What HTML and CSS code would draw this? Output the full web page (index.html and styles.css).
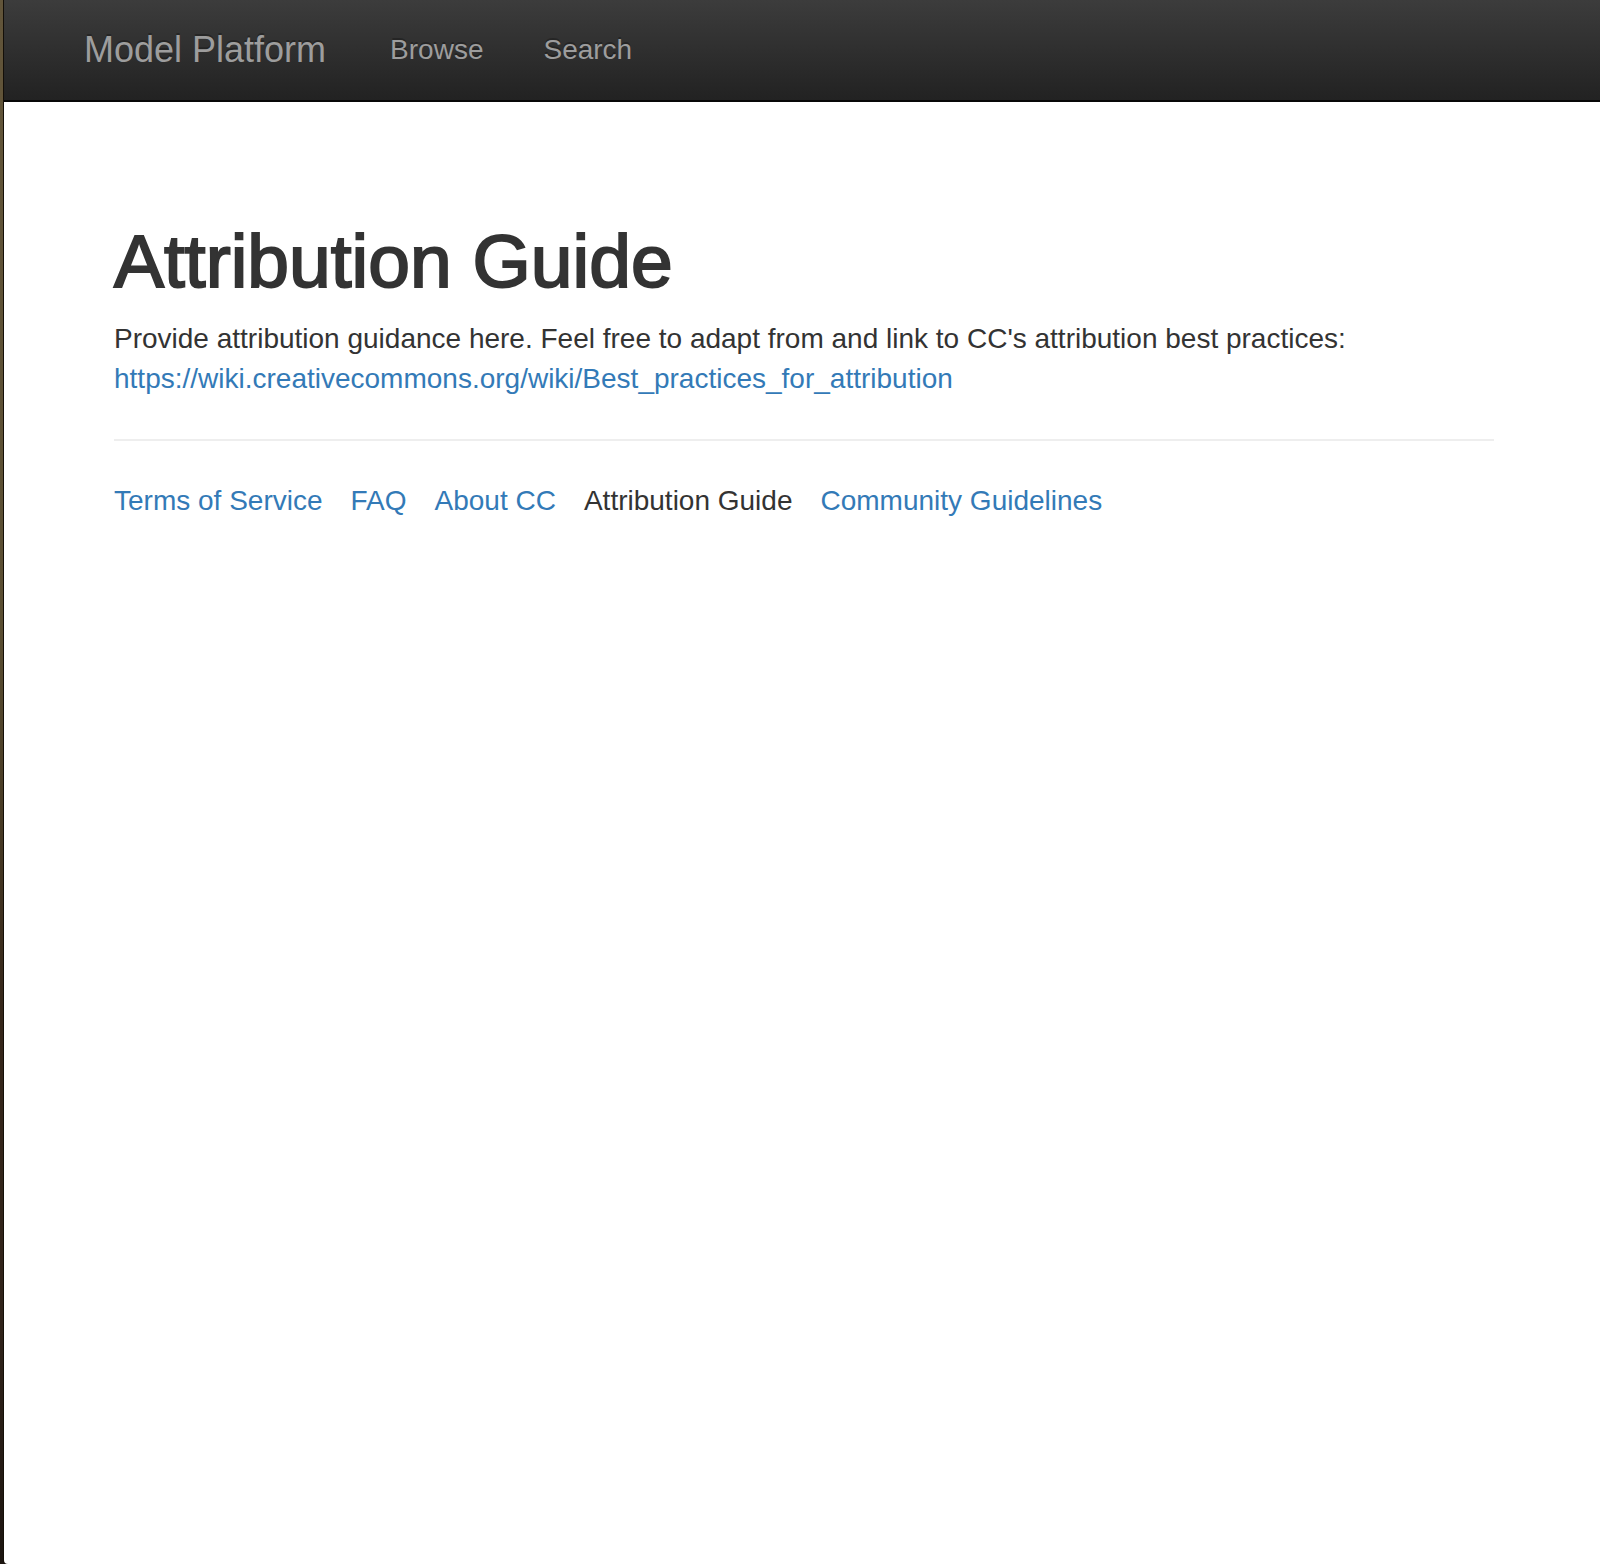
FILE: index.html
```html
<!DOCTYPE html>
<html lang="en">
<head>
<meta charset="utf-8">
<meta name="viewport" content="width=device-width, initial-scale=1">
<title>Attribution Guide - Model Platform</title>
<link rel="stylesheet" href="styles.css">
</head>
<body>
<div class="page">
  <header class="navbar">
    <a class="navbar-brand" href="#">Model Platform</a>
    <nav class="navbar-nav" aria-label="Main">
      <a class="navbar-link" href="#">Browse</a>
      <a class="navbar-link" href="#">Search</a>
    </nav>
  </header>
  <div class="container">
    <main>
      <h1 class="title">Attribution Guide</h1>
      <p class="text">Provide attribution guidance here. Feel free to adapt from and link to CC's attribution best practices: <a class="link" href="https://wiki.creativecommons.org/wiki/Best_practices_for_attribution">https://wiki.creativecommons.org/wiki/Best_practices_for_attribution</a></p>
    </main>
    <footer class="footer">
      <a class="link" href="#">Terms of Service</a>
      <a class="link" href="#">FAQ</a>
      <a class="link" href="#">About CC</a>
      <span>Attribution Guide</span>
      <a class="link" href="#">Community Guidelines</a>
    </footer>
  </div>
</div>
</body>
</html>
```
FILE: styles.css
```css
* {
  box-sizing: border-box;
}

body {
  margin: 0;
  padding-left: 4px;
  background: linear-gradient(#62553a 0%, #5a4e32 40%, #483b25 52%, #35261a 65%, #30231a 85%, #1c1510 100%);
  color: #333;
  font: 28px/40px "Helvetica Neue", Helvetica, "Liberation Sans", Arial, sans-serif;
}

.page {
  min-height: 100vh;
  background: #fff;
  border-bottom-left-radius: 4px;
  box-shadow: -1px 0 0 #140f08;
}

.navbar {
  display: flex;
  align-items: center;
  gap: 64px;
  height: 102px;
  padding: 0 80px;
  background: linear-gradient(#3c3c3c, #222);
  border-bottom: 2px solid #080808;
}

.navbar-brand,
.navbar-link {
  color: #9d9d9d;
  text-decoration: none;
  text-shadow: 0 -2px 0 rgba(0, 0, 0, 0.25);
}

.navbar-brand {
  font-size: 36px;
}

.navbar-nav {
  display: flex;
  gap: 60px;
}

.container {
  padding: 119px 106px 40px 110px;
}

.title {
  margin: 0 0 18px;
  font-size: 75px;
  font-weight: 400;
  line-height: 80px;
  -webkit-text-stroke: 2px #333;
}

.text {
  margin: 0;
}

.link {
  color: #337ab7;
  text-decoration: none;
}

.footer {
  display: flex;
  flex-wrap: wrap;
  gap: 0 28px;
  margin-top: 40px;
  padding-top: 40px;
  border-top: 2px solid #eee;
}
```
